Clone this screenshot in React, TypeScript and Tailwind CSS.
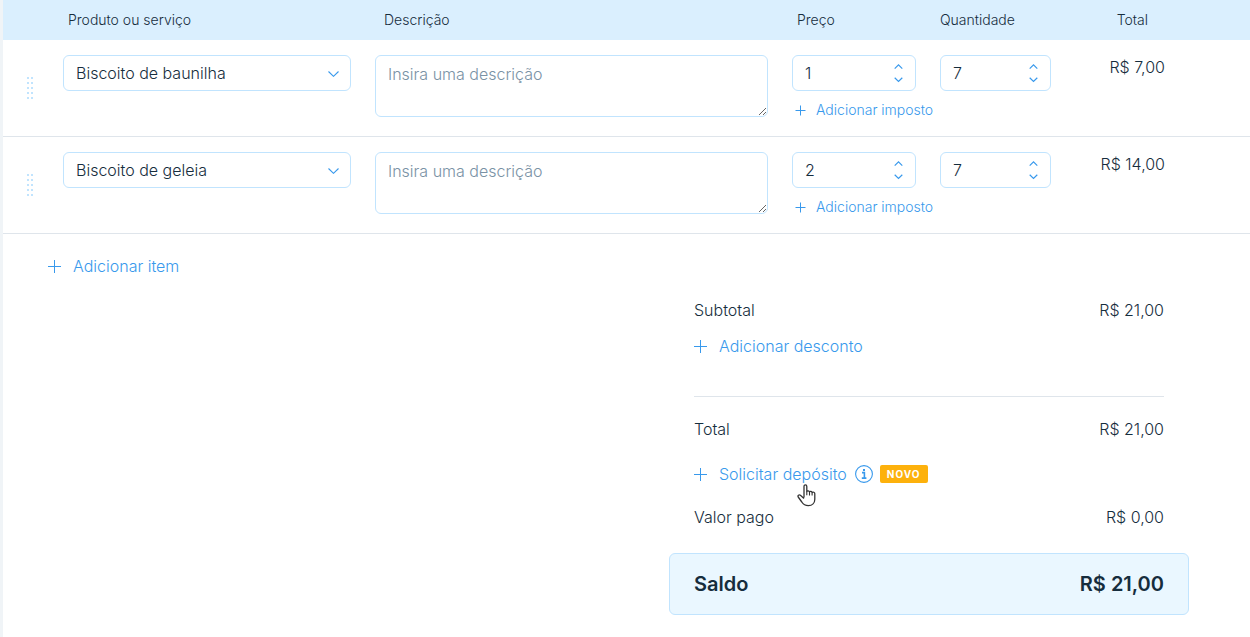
import React, { useState } from 'react'

interface Item {
  id: number
  product: string
  price: number
  quantity: number
  total: string
}

const items: Item[] = [
  { id: 1, product: 'Biscoito de baunilha', price: 1, quantity: 7, total: 'R$ 7,00' },
  { id: 2, product: 'Biscoito de geleia', price: 2, quantity: 7, total: 'R$ 14,00' },
]

const products = ['Biscoito de baunilha', 'Biscoito de geleia']

const PlusIcon = ({ small = false }: { small?: boolean }) => (
  <svg
    className={small ? 'w-[11px] h-[11px] shrink-0' : 'w-[13px] h-[13px] shrink-0'}
    viewBox={small ? '0 0 11 11' : '0 0 13 13'}
    stroke="currentColor"
    fill="none"
    aria-hidden="true"
  >
    <path d={small ? 'M5.5 0.5v10M0.5 5.5h10' : 'M6.5 0v13M0 6.5h13'} />
  </svg>
)

const Chevron = ({ up = false }: { up?: boolean }) => (
  <svg className="w-[9px] h-[6px]" viewBox="0 0 9 6" fill="none" stroke="#3899ec" strokeWidth="1.2" aria-hidden="true">
    <path d={up ? 'M0.7 4.6 4.5 0.9 8.3 4.6' : 'M0.7 0.8 4.5 4.5 8.3 0.8'} />
  </svg>
)

const DragHandle = () => (
  <svg className="w-[6px] h-[22px]" viewBox="0 0 6 22" fill="#c1e4fe" aria-hidden="true">
    {[0, 5, 10, 15, 20].map((y) => (
      <g key={y}>
        <rect x="0" y={y} width="2" height="2" />
        <rect x="4" y={y} width="2" height="2" />
      </g>
    ))}
  </svg>
)

const InfoIcon = () => (
  <svg className="w-[18px] h-[18px]" viewBox="0 0 18 18" fill="none" stroke="#3899ec" aria-hidden="true">
    <circle cx="9" cy="9" r="8.4" strokeWidth="1.1" />
    <path d="M7 7.6h2.4v5.2M6.8 13.1h4.6" strokeWidth="1.6" />
    <rect x="8" y="4" width="2" height="2" fill="#3899ec" stroke="none" />
  </svg>
)

const HandPointer = () => (
  <svg className="w-[19px] h-[23px]" viewBox="0 0 19 23" aria-hidden="true">
    <path
      d="M7 13.5V2.4C7 .4 9.8.4 9.8 2.4v5.2c.4-1 2.4-1 2.7.3.6-.8 2.4-.6 2.6.6.9-.8 2.7-.3 2.7 1.3v5.4c0 3.8-2.6 6.4-6.4 6.4-3.6 0-5.2-1.4-6.6-3.6L1.2 13c-.9-1.5.9-2.8 2.2-1.7L7 14.4"
      fill="#fff"
      stroke="#333"
      strokeWidth="1.3"
      strokeLinejoin="round"
    />
    <path d="M9.8 7.4v3.8M12.5 8v3.4M15.1 8.6v3" fill="none" stroke="#333" strokeWidth="1.1" />
  </svg>
)

interface NumberFieldProps {
  label: string
  initial: number
}

const NumberField = ({ label, initial }: NumberFieldProps) => {
  const [value, setValue] = useState(String(initial))
  const step = (by: number) => setValue(String(Math.max(0, (Number(value) || 0) + by)))

  return (
    <div className="mr-6 flex h-9 rounded-md border border-[#c1e4fe] bg-white">
      <input
        aria-label={label}
        inputMode="numeric"
        value={value}
        onChange={(e) => setValue(e.target.value)}
        className="min-w-0 flex-1 bg-transparent pl-3 outline-none"
      />
      <div className="mr-3 flex flex-col justify-center gap-[7px]">
        <button type="button" aria-label={`Aumentar ${label}`} onClick={() => step(1)}>
          <Chevron up />
        </button>
        <button type="button" aria-label={`Diminuir ${label}`} onClick={() => step(-1)}>
          <Chevron />
        </button>
      </div>
    </div>
  )
}

const ItemRow = ({ item }: { item: Item }) => {
  const [product, setProduct] = useState(item.product)

  return (
    <tr className="border-b border-[#dfe5eb] align-top">
      <td className="pt-[37px] pl-6">
        <button type="button" aria-label="Reordenar item" className="block cursor-grab">
          <DragHandle />
        </button>
      </td>
      <td className="pt-[15px] pr-6">
        <div className="relative">
          <select
            aria-label="Produto ou serviço"
            value={product}
            onChange={(e) => setProduct(e.target.value)}
            className="block h-9 w-full appearance-none rounded-md border border-[#c1e4fe] bg-white pl-3 pr-8 outline-none"
          >
            {products.map((name) => (
              <option key={name}>{name}</option>
            ))}
          </select>
          <svg
            className="pointer-events-none absolute top-4 right-3 h-[6px] w-[11px]"
            viewBox="0 0 11 6"
            fill="none"
            stroke="#3899ec"
            strokeWidth="1.1"
            aria-hidden="true"
          >
            <path d="M0.5 0.5 5.5 5.3 10.5 0.5" />
          </svg>
        </div>
      </td>
      <td className="pt-[15px] pr-6 pb-[19px]">
        <textarea
          aria-label="Descrição"
          placeholder="Insira uma descrição"
          className="block h-[62px] w-full rounded-md border border-[#c1e4fe] bg-white px-3 py-[6px] font-light outline-none placeholder:text-[#7a92a5]"
        />
      </td>
      <td className="pt-[15px]">
        <NumberField label="Preço" initial={item.price} />
        <button type="button" className="mt-[9px] flex items-center gap-[10px] pl-[3px] text-sm whitespace-nowrap text-[#3899ec]">
          <PlusIcon small />
          Adicionar imposto
        </button>
      </td>
      <td className="pt-[15px]">
        <NumberField label="Quantidade" initial={item.quantity} />
      </td>
      <td className="pt-[15px] pr-[85px] text-right whitespace-nowrap">{item.total}</td>
    </tr>
  )
}

const LinkButton = ({ children }: { children: React.ReactNode }) => (
  <button type="button" className="flex items-center gap-3 text-[#3899ec]">
    <PlusIcon />
    {children}
  </button>
)

const SummaryRow = ({ label, value }: { label: string; value: string }) => (
  <div className="flex justify-between">
    <span>{label}</span>
    <span>{value}</span>
  </div>
)

export default function App() {
  return (
    <main className="min-h-screen border-l-3 border-[#f0f4f7] bg-white font-[Inter,'Liberation_Sans',sans-serif] text-base font-[350] text-[#162d3d]">
      <table className="w-full table-fixed border-collapse">
        <thead>
          <tr className="h-10 bg-[#daeffe] text-left text-sm">
            <td className="w-[60px]" />
            <th className="w-[312px] pl-[5px] font-[350]">Produto ou serviço</th>
            <th className="pl-[9px] font-[350]">Descrição</th>
            <th className="w-[148px] pl-[5px] font-[350]">Preço</th>
            <th className="w-[135px] font-[350]">Quantidade</th>
            <th className="w-[175px] pr-[102px] text-right font-[350]">Total</th>
          </tr>
        </thead>
        <tbody>
          {items.map((item) => (
            <ItemRow key={item.id} item={item} />
          ))}
        </tbody>
      </table>

      <div className="pt-5 pl-[45px]">
        <LinkButton>Adicionar item</LinkButton>
      </div>

      <section className="mt-5 mr-[61px] ml-auto w-[520px] pb-5">
        <div className="px-[25px]">
          <SummaryRow label="Subtotal" value="R$ 21,00" />
          <div className="mt-3">
            <LinkButton>Adicionar desconto</LinkButton>
          </div>
          <hr className="mt-[38px] mb-5 border-[#dfe5eb]" />
          <SummaryRow label="Total" value="R$ 21,00" />
          <div className="mt-[21px] mb-[19px] flex items-center">
            <div className="relative">
              <LinkButton>Solicitar depósito</LinkButton>
              <span className="pointer-events-none absolute top-[22px] left-[103px]">
                <HandPointer />
              </span>
            </div>
            <button type="button" aria-label="Mais informações" className="ml-2">
              <InfoIcon />
            </button>
            <span className="ml-[7px] flex h-[18px] items-center rounded-xs bg-[#fdb10c] px-[7px] text-[10px] font-bold tracking-widest text-white">
              NOVO
            </span>
          </div>
          <SummaryRow label="Valor pago" value="R$ 0,00" />
        </div>
        <div className="mt-6 flex items-center justify-between rounded-md border border-[#c1e4fe] bg-[#eaf7ff] px-6 py-4 text-xl font-semibold">
          <span>Saldo</span>
          <span>R$ 21,00</span>
        </div>
      </section>
    </main>
  )
}
